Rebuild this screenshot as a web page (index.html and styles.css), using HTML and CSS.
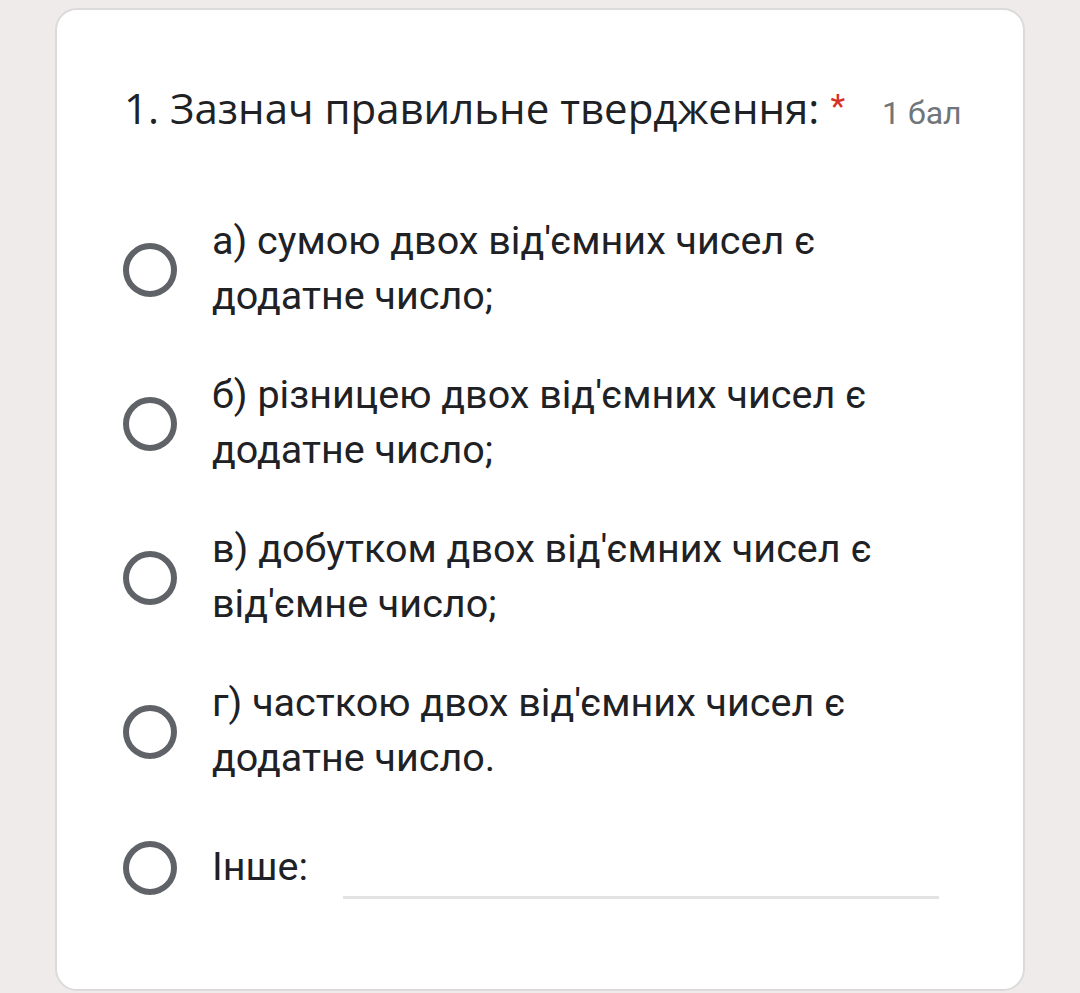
FILE: index.html
```html
<!DOCTYPE html>
<html lang="uk">
<head>
<meta charset="utf-8">
<link rel="stylesheet" href="styles.css">
</head>
<body>
<div class="card">
  <div class="title-row">
    <span class="title">1. Зазнач правильне твердження:</span>
    <span class="req">*</span>
    <span class="points">1 бал</span>
  </div>
  <div class="options">
    <div class="option">
      <span class="radio"></span>
      <span class="label">а) сумою двох від'ємних чисел є<br>додатне число;</span>
    </div>
    <div class="option">
      <span class="radio"></span>
      <span class="label">б) різницею двох від'ємних чисел є<br>додатне число;</span>
    </div>
    <div class="option">
      <span class="radio"></span>
      <span class="label">в) добутком двох від'ємних чисел є<br>від'ємне число;</span>
    </div>
    <div class="option">
      <span class="radio"></span>
      <span class="label">г) часткою двох від'ємних чисел є<br>додатне число.</span>
    </div>
    <div class="option other">
      <span class="radio"></span>
      <span class="label">Інше:</span>
      <span class="other-input"></span>
    </div>
  </div>
</div>
</body>
</html>
```

FILE: styles.css
```css
html, body {
  margin: 0;
  padding: 0;
  background: #efebea;
}
body {
  width: 1080px;
  height: 993px;
  overflow: hidden;
}
.card {
  box-sizing: border-box;
  margin: 8px 0 0 55px;
  width: 970px;
  height: 983px;
  background: #ffffff;
  border: 2px solid #dcdadb;
  border-radius: 22px;
  padding: 70px 0 0 66px;
}
.title-row {
  display: flex;
  align-items: baseline;
  height: 56px;
}
.title {
  font-family: "Open Sans", sans-serif;
  font-size: 42px;
  line-height: 56px;
  color: #202124;
  padding-left: 1px;
}
.req {
  font-family: Roboto, sans-serif;
  font-size: 34px;
  line-height: 34px;
  color: #d93025;
  margin-left: 11px;
  align-self: flex-start;
  margin-top: 9px;
}
.points {
  font-family: Roboto, sans-serif;
  font-size: 32px;
  color: #70757a;
  margin-left: 37px;
}
.options {
  margin-top: 77px;
  display: flex;
  flex-direction: column;
  gap: 44px;
}
.option {
  display: flex;
  align-items: center;
  gap: 35px;
}
.radio {
  box-sizing: border-box;
  width: 54px;
  height: 54px;
  border: 6px solid #5f6368;
  border-radius: 50%;
  flex: none;
  margin-top: 4px;
}
.label {
  font-family: Roboto, sans-serif;
  font-size: 39.5px;
  line-height: 55px;
  color: #202124;
}
.other {
  height: 74px;
}
.other-input {
  width: 596px;
  height: 70px;
  box-sizing: border-box;
  border-bottom: 3px solid #e2e2e2;
  align-self: flex-start;
}
```
